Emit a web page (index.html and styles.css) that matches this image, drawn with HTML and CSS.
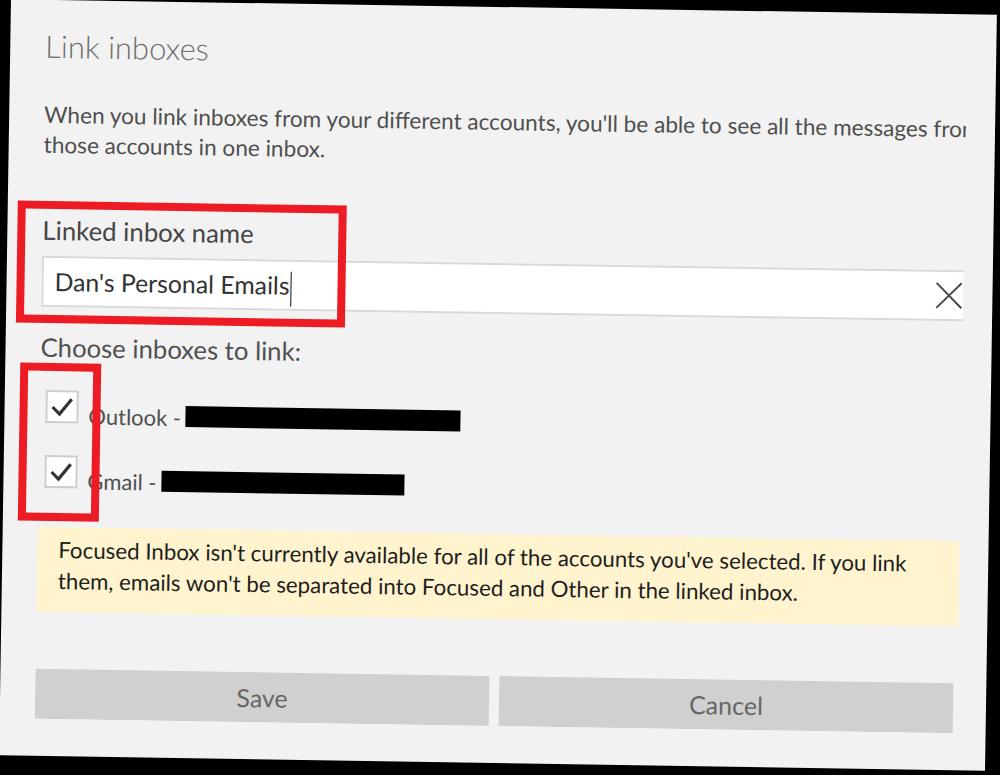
FILE: index.html
```html
<!DOCTYPE html>
<html lang="en">
<head>
<meta charset="utf-8">
<title>Link inboxes</title>
<link rel="stylesheet" href="styles.css">
</head>
<body>
<div class="panel">
  <div class="content">
    <h1 class="title">Link inboxes</h1>
    <p class="desc"><span class="line">When you link inboxes from your different accounts, you'll be able to see all the messages from</span><span class="line">those accounts in one inbox.</span></p>
    <div class="label">Linked inbox name</div>
    <div class="field">
      <span class="field-text">Dan's Personal Emails</span><span class="caret"></span>
      <span class="spacer"></span>
      <svg class="clear" width="27" height="27" viewBox="0 0 27 27"><path d="M1 1 L26 26 M26 1 L1 26" stroke="#4a4a4a" stroke-width="2" fill="none"/></svg>
    </div>
    <div class="choose">Choose inboxes to link:</div>
    <div class="accounts">
      <div class="account">
        <span class="box"><svg width="29" height="29" viewBox="0 0 29 29"><path d="M5 15 L12 22 L24 7" stroke="#333" stroke-width="3.2" fill="none"/></svg></span>
        <span class="acc-text">Outlook - <span class="redact redact-1"></span></span>
      </div>
      <div class="account">
        <span class="box"><svg width="29" height="29" viewBox="0 0 29 29"><path d="M5 15 L12 22 L24 7" stroke="#333" stroke-width="3.2" fill="none"/></svg></span>
        <span class="acc-text">Gmail - <span class="redact redact-2"></span></span>
      </div>
    </div>
    <div class="notice">Focused Inbox isn't currently available for all of the accounts you've selected. If you link them, emails won't be separated into Focused and Other in the linked inbox.</div>
    <div class="buttons">
      <button class="btn">Save</button>
      <button class="btn">Cancel</button>
    </div>
  </div>
  <div class="mark mark-name"></div>
  <div class="mark mark-boxes"></div>
</div>
</body>
</html>
```
FILE: styles.css
```css
html, body {
  margin: 0;
  padding: 0;
  background: #000;
  overflow: hidden;
  width: 1000px;
  height: 775px;
}

.panel {
  position: relative;
  box-sizing: border-box;
  width: 986px;
  height: 756px;
  margin: 7px 0 0 5px;
  padding: 26px 0 0 35px;
  background: #f2f2f2;
  transform: rotate(0.9deg);
  font-family: Lato, "Open Sans", sans-serif;
}

.content {
  width: 922px;
  overflow: hidden;
}

.title {
  margin: 0;
  font-size: 31px;
  line-height: 40px;
  font-weight: 300;
  color: #6e6e6e;
}

.desc {
  margin: 34px 0 0;
  font-size: 22.6px;
  line-height: 30px;
  color: #4f4f4f;
  white-space: nowrap;
}

.desc .line {
  display: block;
}

.label {
  margin-top: 54px;
  font-size: 25.8px;
  line-height: 32px;
  color: #454545;
}

.field {
  box-sizing: border-box;
  margin-top: 10px;
  height: 51px;
  display: flex;
  align-items: center;
  background: #fff;
  border: 2px solid #d9d9d9;
  border-right: none;
  padding-left: 11px;
  font-size: 24.8px;
  color: #333;
}

.caret {
  display: inline-block;
  width: 0;
  height: 35px;
  border-left: 1.5px solid #111;
  margin-left: 1px;
  align-self: flex-start;
  margin-top: 10px;
}

.spacer {
  flex: 1;
}

.clear {
  margin-right: 1px;
}

.choose {
  margin-top: 24px;
  font-size: 25.7px;
  line-height: 32px;
  color: #505050;
}

.accounts {
  margin-top: 27px;
}

.account {
  height: 65px;
  display: flex;
  align-items: flex-start;
}

.box {
  box-sizing: border-box;
  width: 33px;
  height: 33px;
  margin-left: 6px;
  background: #fff;
  border: 2px solid #cdcdcd;
  display: flex;
  align-items: center;
  justify-content: center;
}

.acc-text {
  margin-left: 10px;
  padding-top: 9px;
  font-size: 22px;
  line-height: 33px;
  color: #4f4f4f;
  white-space: nowrap;
}

.redact {
  display: inline-block;
  height: 21px;
  background: #000;
  vertical-align: -1px;
  margin-left: -1px;
}

.redact-1 { width: 275px; }
.redact-2 { width: 243px; }

.notice {
  margin-top: 7px;
  padding: 7px 21px 16px;
  background: #fff4ce;
  font-size: 22.3px;
  line-height: 31px;
  color: #1e1e1e;
}

.buttons {
  margin-top: 57px;
  width: 918px;
  display: flex;
  gap: 10px;
}

.btn {
  flex: 1;
  height: 50px;
  border: none;
  background: #d0d0d0;
  font-family: Lato, "Open Sans", sans-serif;
  font-size: 25px;
  color: #666;
  padding: 0;
}

.mark {
  position: absolute;
  box-sizing: border-box;
  border: 8px solid #ed1c24;
}

.mark-name {
  left: 10px;
  top: 201px;
  width: 329px;
  height: 122px;
}

.mark-boxes {
  left: 15px;
  top: 363px;
  width: 81px;
  height: 158px;
}
```
